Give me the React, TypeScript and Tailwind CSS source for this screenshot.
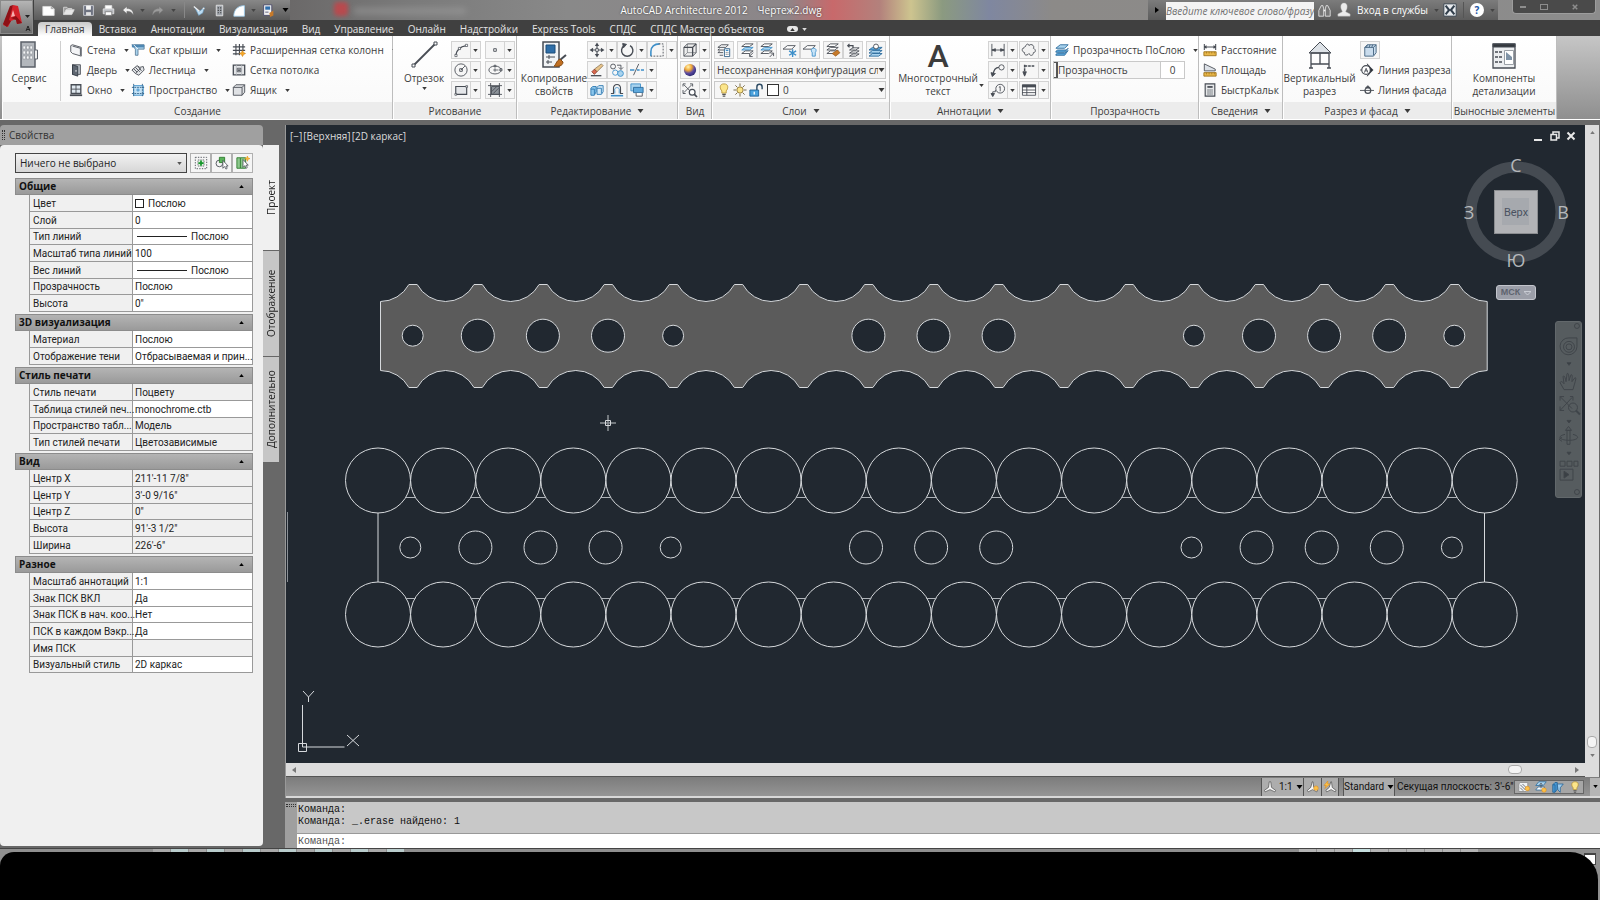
import { useState } from 'react';
import type { ReactNode } from 'react';
import clsx from 'clsx';

const BLUE = '#3d8fc9';
const LIGHT = '#a9d3ee';
const INK = '#474c54';

/* small ribbon glyphs, all drawn in a 16x16 box */
const glyphs: Record<string, ReactNode> = {
  newFile: <path d="M1 3h10l4 3v8H1z M11 3v3h4" fill="#fff" stroke="#ddd" />,
  open: <g stroke="#ddd" fill="#9a9a9a"><path d="M2 13V4h4l1 1.500h5V7" /><path d="M2 13l3-6h10l-3 6z" fill="#e6e6e6" /></g>,
  save: <g><path d="M2 2h12v12H2z" fill="#6d7280" stroke="#d5d8de" /><path d="M5 2h6v5H5z" fill="#f4f4f4" stroke="none" /><path d="M5 10h6v4H5z" fill="#e0e0e0" stroke="none" /></g>,
  print: <g stroke="#e8e8e8"><path d="M4 6V2h8v4" fill="#fff" /><path d="M1.500 6h13v6h-13z" fill="#b9bcc1" /><path d="M4 9.500h8V14H4z" fill="#fff" stroke="#777" /></g>,
  undo: <path d="M6 3L1 7.500 6 12V9c4 0 6 1 8 4.500C14 8 11 5.500 6 5.500z" fill="#eee" stroke="#666" strokeWidth=".5" />,
  redo: <path d="M10 3l5 4.500L10 12V9c-4 0-6 1-8 4.500C2 8 5 5.500 10 5.500z" fill="#9b9b9b" stroke="#777" strokeWidth=".5" />,
  brushBlue: <g><path d="M2 4l6 5 6-5-2 7-5 3z" fill="#bcdcf2" stroke="#5d93ba" strokeWidth=".7" /><path d="M1 3l7 6M12 5l2 1" stroke="#eee" strokeWidth="1.500" /></g>,
  doorQat: <g stroke="#eee"><path d="M4 1.500h8v13H4z" fill="#9fa4ab" /><path d="M6.500 4v1.500M9.500 4v1.500M6.500 7v1.500M9.500 7v1.500M6.500 10v1.500M9.500 10v1.500" stroke="#333" strokeWidth="1.300" /></g>,
  arcQat: <path d="M1 15C1 7 6 2 14 2v13z" fill="#fff" stroke="#9fd0f0" />,
  matchQat: <g><path d="M2 1h10v13H2z" fill="#f2f2f2" stroke="#446" /><path d="M4 3h6v4H4z" fill="#2f6fae" stroke="none" /><path d="M4 10h4" stroke="#446" /><path d="M9 11l5-3v6l-4 2z" fill="#c77a2a" stroke="none" /></g>,
  wall: <path d="M2 3l2-1 10 3v10l-10-3-2-2z M4 3.500l9 2.500V14" fill="#f3f4f6" strokeLinejoin="round" />,
  door: <g><path d="M4 2h9v11H4z" fill="#b9bfc6" /><path d="M4 2l6 2v11l-6-2z" fill="#5f6772" stroke="#333b45" /><path d="M8 8v2" stroke="#fff" /></g>,
  window: <g><path d="M2.500 2h11v10h-11z" fill="#dfe8ef" strokeWidth="1.500" /><path d="M8 2v10M2.500 7h11" /><path d="M1 14h14" strokeWidth="2" /></g>,
  roof: <g><path d="M1 2h14v5H8v7H5V7z" fill={LIGHT} stroke="#5c7e99" /><path d="M1 2h14v3H1z" fill="#4d87b3" stroke="none" /><path d="M8 7l-5-5" stroke="#fff" /></g>,
  stair: <g><path d="M1 8l6-5 3 2 4-1 1 4-6 6-4-2z" fill="#e3e5e8" /><path d="M3 6.500l4 4M5 5l5 5M8 4l4 5M5 12l6-6" /></g>,
  space: <g><path d="M3 3h11v11H3z" fill="#c4e2f5" stroke={BLUE} /><path d="M3 1v14M13 1v14M1 5h14M1 12h14" stroke="#2f5f86" strokeDasharray="2 1" /><path d="M8 6v4M6 8h4" stroke={BLUE} /></g>,
  columnGrid: <g strokeWidth="1.300"><path d="M4.500 1v13M8.500 1v13M12.500 1v8M1 4.500h14M1 8.500h14M1 12.500h8" /><path d="M12 8.500l1.200 2.300 2.300 1.200-2.300 1.200L12 15.500l-1.200-2.300L8.500 12l2.300-1.200z" fill="#f5a623" stroke="#c97b10" strokeWidth=".6" /></g>,
  ceiling: <g><path d="M1.500 2.500h13v11h-13z" fill="#e4e6e8" strokeWidth="1.500" /><path d="M5 2.500v11M11 2.500v11" stroke="#b8bcc0" /><path d="M6 6h4v4H6z" fill="#fff" /><path d="M8 7v2" strokeWidth="2" /></g>,
  box: <path d="M1.500 5l3-3h10v8.500l-3 3.500h-10z M1.500 5h10v9 M11.500 5l3-3" fill="#dfe1e4" strokeLinejoin="round" />,
  arc: <g><path d="M2 14C3 8 7 4 14 3" strokeWidth="1.500" /><path d="M1 13h2.500v2.500H1zM13 1.500h2.500V4H13zM5 5h2.500v2.500H5z" fill="#fff" strokeWidth=".8" /></g>,
  point: <path d="M6.500 6.500h3v3h-3z" />,
  circle: <g><circle cx="8" cy="8" r="7" /><path d="M8 8l4.500-4.500M6.500 6.500h3v3h-3z" /></g>,
  ellipse: <g><ellipse cx="8" cy="8" rx="7" ry="4.500" /><path d="M8 6v4M6 8h6M13.500 6.500h2.500v2.500h-2.500zM7 2.500h2v2H7z" strokeWidth=".9" /></g>,
  rect: <g><path d="M2 4h12.500v9H2z" fill="#e4e6e9" strokeWidth="1.300" /><path d="M1 12h2v2H1zM13.500 3h2v2h-2z" fill="#fff" strokeWidth=".8" /></g>,
  hatch: <g><path d="M4 4h9v9H4z" fill="#8c9299" /><path d="M0 3h16M0 13h16M3 0v16M13 0v16M4 10l6-6M6 12l6-6" /></g>,
  move: <g fill={INK}><path d="M8 2v12M2 8h12" strokeWidth="1.300" /><path d="M8-.5l2.500 4h-5zM8 16.500l2.500-4h-5zM-.5 8l4-2.500v5zM16.500 8l-4-2.500v5z" stroke="none" /><path d="M6.500 6.500h3v3h-3z" fill="#fff" /></g>,
  rotate: <g><path d="M11.500 3A6.500 6.500 0 1 1 5 3" strokeWidth="1.600" /><path d="M3 .5l4.500 1L4 5.500z" fill={INK} /></g>,
  fillet: <g><path d="M1 15V10C1 4 5 1 11 1" stroke={BLUE} strokeWidth="1.800" /><path d="M10 1h5v14H1" strokeDasharray="2 1.500" /></g>,
  erase: <g><path d="M13 1l2 2-7 7-3-3z" fill="#e8c48a" stroke="#7d6543" strokeWidth=".8" /><path d="M5 7l3 3-3 3-3-3z" fill="#d8664d" stroke="#7a3728" strokeWidth=".8" /><path d="M1 14.500h12" strokeWidth="1.500" /></g>,
  copy: <g><circle cx="3.500" cy="4" r="2.800" /><circle cx="6" cy="11" r="3" stroke={BLUE} /><circle cx="12" cy="12" r="3.300" fill={LIGHT} stroke={BLUE} /><path d="M8 2.500h4.500V7M10 5l2.500 2.500L15 5" /></g>,
  trim: <g><path d="M0 8h5M8 8h3M12.500 8H16" stroke={BLUE} strokeWidth="1.500" /><path d="M4 14L10 1" /></g>,
  solid: <g stroke="#2a77b0" fill="#8cc6ec"><path d="M1 6l2-2h4v6l-2 4H1zM1 7h4v6" /><path d="M8 5l2-2h5v7l-2 3H8zM8 6h5v6" fill="#d3eafa" /></g>,
  offset: <g><path d="M5.500 12V9C4 4 12 4 10.500 9v3" stroke={BLUE} /><path d="M1 12h3V7c-1-7 9-7 8 0v5h3" strokeWidth="1.300" /><path d="M1 14.500h14" stroke={BLUE} strokeWidth="1.800" /></g>,
  overlap: <g><path d="M1 1h11v8H1z" fill={LIGHT} stroke={BLUE} /><path d="M4 5h11v6H4z" fill="#5fa9dc" stroke="#2a6a9c" /><path d="M7 11.500V15h7v-3.500" fill="#fff" /></g>,
  cube: <g><path d="M1 5l4-4h10v10l-4 4H1z" fill="#eee" /><path d="M1 5h10v10M11 5l4-4" strokeWidth="1.500" /><path d="M5 1v10h10M5 11l-4 4" strokeWidth=".6" /></g>,
  zoomExt: <g><path d="M0 4V1h3M1 2l9 9M8 1h3v3M10 2L1 11M0 8v4h3" /><circle cx="10.500" cy="10.500" r="3.300" fill="#fff" strokeWidth="1.400" /><path d="M13 13l3 3" strokeWidth="2" /></g>,
  layerProps: <g><path d="M1 5l4-3h8l-3 3zM1 8l2-1.500M1 8h7M1 11l2-1.500M1 11h6M3 14h4" /><path d="M8.500 6.500h6v9h-6z" fill="#fff" stroke="#2f5f86" /><path d="M10 8.500h3" stroke={BLUE} strokeWidth="1.500" /><path d="M10 11h3M10 13h3" strokeDasharray="1 1" /></g>,
  layersDown: <g><path d="M2 4l4-3h9l-4 3z" fill="#fff" /><path d="M2 8l4-3h9l-4 3z" fill={LIGHT} stroke={BLUE} /><path d="M2 12l4-3h9l-4 3z" fill="#fff" /><path d="M15 11l-4 4M11 12v3.500h3.500" /></g>,
  layersUp: <g><path d="M1 4l4-3h9l-4 3z" fill="#fff" /><path d="M1 8l4-3h9l-4 3z" fill={LIGHT} stroke={BLUE} /><path d="M1 12l4-3h9l-4 3z" fill="#fff" /><path d="M11 16l4-4M12 11.500h3.500V15" /></g>,
  layerFreeze: <g><path d="M0 7l5-4h9l-4 4z" fill="#fff" /><path d="M11 7v9M7 9l8 5M15 9l-8 5" stroke={BLUE} strokeWidth="1.600" /></g>,
  layerOff: <g><path d="M0 7l5-4h9l-4 4z" fill="#fff" /><path d="M12 6c3.500 0 3.500 3 2 5v4h-3.500v-4C9 9 9 6 12 6z" fill="#c8e4f8" stroke={BLUE} /></g>,
  layerMatch: <g><path d="M1 4l4-3h9l-4 3zM1 8l4-3h9l-4 3zM1 12l4-3h9l-4 3z" fill="#fff" /><path d="M7 12l6-4 3 3-5 4z" fill="#c77a2a" stroke="#8d5317" strokeWidth=".7" /></g>,
  layerPrev: <g><path d="M4 8l4-2.500h7L11 8zM4 11.500L8 9h7l-4 2.500zM4 15l4-2.500h7L11 15z" fill="#fff" /><path d="M8 6V3H2M4 1L2 3l2 2" strokeWidth="1.400" /></g>,
  layerIso: <g><path d="M0 8l4-3h11l-4 3z" fill="#5fa9dc" stroke="#2a6a9c" /><path d="M0 11.500l4-3h11l-4 3zM0 15l4-3h11l-4 3z" fill={LIGHT} stroke="#2a6a9c" /><circle cx="8" cy="4" r="2.800" fill="#fff" /></g>,
  dimLinear: <path d="M1 1v14M15 1v14M1 8h14M1 8l4-1.500v3zM15 8l-4-1.500v3z" fill={INK} />,
  cloud: <path d="M4 4c1-4 4-3 4-1 2-3 7 0 5 3 3 1 3 5 0 5 0 4-4 4-5 1-2 3-6 2-5-1-4-1-3-6-1-5 0-1 1-2 2-2z" fill="#f2f2f2" />,
  leader: <g><path d="M2 14c1-6 3-9 7-9" strokeWidth="1.500" /><circle cx="12" cy="5" r="3" /><path d="M0 11l1.500 4.500L5 12z" fill={INK} /></g>,
  dimCont: <g><path d="M3 2v11M3 3.500h12" strokeWidth="1.700" strokeDasharray="3 1" /><path d="M1 10l2 5 2-5z" fill={INK} /></g>,
  tag: <g><circle cx="10.500" cy="6.500" r="5" /><path d="M10.500 4v5.500M9 5l1.500-1M2 14v-4h3v-2" /><path d="M0 12h4l-2 3.500z" fill={INK} /></g>,
  tableG: <g><path d="M.5 2h15v12H.5z" fill="#fff" /><path d="M0 3.500h16" strokeWidth="3" /><path d="M0 8h16M0 11h16M5.500 4v10" /></g>,
  layersBlue: <g stroke="#2a6a9c"><path d="M1 6l5-4h9l-4 4z" fill={LIGHT} /><path d="M1 9.500l2-1.500h10l2-2-4 4.500H1zM1 13l2-1.500h8l4-3L11 14H1z" fill="#5fa9dc" /></g>,
  distance: <g><path d="M1.500 1v7M14.500 1v7M2 4.500h12M4 3L2 4.500 4 6M12 3l2 1.500L12 6" strokeWidth="1.200" /><path d="M1 10h14v4.500H1z" fill="#e9b84a" stroke="#9c7018" /><path d="M4 10v2M7 10v2M10 10v2M13 10v2" stroke="#9c7018" strokeWidth=".8" /></g>,
  area: <g><path d="M1.500 1L14 7v2H1.500z" fill="#dde2e8" /><path d="M1 11h14v4H1z" fill="#e9b84a" stroke="#9c7018" /><path d="M4 11v2M7 11v2M10 11v2M13 11v2" stroke="#9c7018" strokeWidth=".8" /></g>,
  calc: <g><path d="M2.500 1h11v14h-11z" fill="#e6e8ea" strokeWidth="1.300" /><path d="M5 4.500h6" strokeWidth="2" /><path d="M5 8h6M5 10.300h6M5 12.600h6" strokeDasharray="1.500 .8" strokeWidth="1.300" /></g>,
  sectionBox: <path d="M2 5l3-3h10v9l-3 4H2z M2 5h10v9M12 5l3-3M5 2l-1 3M8 2L7 5M11 2l-1 3" fill="#c9dced" stroke="#3f5f7b" />,
  sectionLine: <g><circle cx="7" cy="8" r="5" fill="#fff" strokeWidth="1.300" /><path d="M8 1l7 7-7 7c5-3 5-11 0-14z" fill="#2c3138" /><path d="M5 11l2-5 2 5M5.500 9h3M0 8h2" /></g>,
  facadeLine: <g><circle cx="9" cy="8.500" r="3.300" strokeWidth="1.400" /><path d="M0 8.500h16M6.500 5.500L9 3l2.500 2.500z" fill={INK} /></g>,
  binoculars: <g stroke="#eee"><path d="M1 15V8l3-6h2l1 4v9zM15 15V8l-3-6h-2L9 6v9z" fill="#777" /><path d="M7 8h2" strokeWidth="2" /></g>,
  user: <g fill="#ececec" stroke="#aaa" strokeWidth=".5"><path d="M8 0c3.500 0 4 3 3.500 6-.5 2-1.500 3-1.500 4l5 2.500V15H1v-2.500L6 10c0-1-1-2-1.500-4C4 3 4.500 0 8 0z" /></g>,
  exchange: <g><path d="M1 1h14v14H1z" fill="#e9ecef" stroke="#33404d" /><path d="M3 3l4 5-4 5M13 3L9 8l4 5" stroke="#33404d" strokeWidth="2.400" /></g>,
  selectAdd: <g><path d="M1.500 1.500h13v13h-13z" strokeDasharray="1.500 1.500" /><path d="M4.500 4.500h7v7h-7z" strokeDasharray="1 1" fill="#e2f5e2" /><path d="M8 5v6M5 8h6" stroke="#14962a" strokeWidth="2" /></g>,
  selectPick: <g><circle cx="5" cy="8.500" r="3.800" /><path d="M5 1.500h6v6H5z" fill="#5bb35b" stroke="#2b7a2b" /><path d="M9 5v9l2-2 1.500 3 1.500-1-1.500-2.500H15z" fill="#fff" strokeWidth=".9" /></g>,
  quickSelect: <g><path d="M1 2h4v12H1zM5 2h6v12H5" fill="#8cc88c" stroke="#2b7a2b" /><path d="M8 4v9l2-2 1.500 3 1.500-1-1.500-2.500H14z" fill="#fff" strokeWidth=".9" /><path d="M13 0l.8 2.200L16 3l-2.200.8L13 6l-.8-2.200L10 3l2.200-.8z" fill="#f8b73a" stroke="#e8960c" strokeWidth=".6" /></g>,
  annoScale: <path d="M8 1h1l1 7.500 5.500 4-1 2L8 11.500l-6.500 3-1-2L6 8.500 7 1z" fill="#f5f5f5" stroke="#555" />,
  annoBulb: <g><path d="M7 1h1l1 7.500 5 4-1 2-5.500-3-6 3-1-2 4.500-4z" fill="#f5f5f5" stroke="#555" /><circle cx="12" cy="9.500" r="3" fill="#fbc04a" stroke="#e08a10" strokeWidth=".7" /></g>,
  annoBolt: <g><path d="M9 1h1l1 7.500 5 4-1 2-5.500-3-6 3-1-2 4.500-4z" fill="#f5f5f5" stroke="#555" /><path d="M5 0L0 6h3L1 10l7-6H5z" fill="#fbc04a" stroke="#e08a10" strokeWidth=".7" /></g>,
  trayA: <g><path d="M1 4l2-2h10v10l-2 2H1z" fill="#eef1f4" stroke="#888" /><path d="M3 5l7 7M3 9l4 4M6 4l6 6" /><circle cx="12.500" cy="10" r="3" fill="#fbc04a" stroke="#e08a10" strokeWidth=".7" /></g>,
  trayB: <g><path d="M1 6l4-5h10l-4 5z" fill={LIGHT} stroke="#2a6a9c" /><path d="M1 12l3-4h9l-3 4z" stroke="#2a6a9c" fill="#fff" /><path d="M8 3v7M6 5l2-2 2 2" /><circle cx="12" cy="12" r="3" fill="#fbc04a" stroke="#e08a10" strokeWidth=".7" /></g>,
  trayC: <g stroke="#1d5e93"><path d="M1 5l3-3h3v9l-3 4H1zM4 5v10M1 5h3" fill="#4b9bd6" /><path d="M7 4h8l-4 5v6l-3-3z" fill="#9fcdee" /></g>,
  bulb: <g><path d="M8 1c5.500 0 5 5.500 2.500 8v2.500h-5V9C3 6.500 2.500 1 8 1z" fill="#fbe58a" stroke="#b08a2a" strokeWidth=".9" /><path d="M6 13h4M6.500 15h3" stroke="#555" strokeWidth="1.300" /></g>,
  sun: <g><circle cx="8" cy="8" r="3.600" fill="#fbe58a" stroke="#8d7434" /><path d="M8 .5v3M8 12.500v3M.5 8h3M12.500 8h3M2.700 2.700l2.100 2.100M11.200 11.200l2.100 2.100M13.300 2.700l-2.100 2.100M4.800 11.200l-2.100 2.100" stroke="#6a5c38" /></g>,
  unlock: <g><path d="M1 8h10v7H1z" fill="#4ba3de" stroke="#1d5e93" /><path d="M9 8V4.500c0-4 6-4 6 0V7" stroke="#2c4a63" strokeWidth="1.600" /><path d="M6 10v3" stroke="#fff" strokeWidth="1.500" /></g>,
};

function Glyph({ name, className = 'w-3.5 h-3.5' }: { name: string; className?: string }) {
  if (name === 'sphere') {
    return (
      <svg viewBox="0 0 16 16" className={clsx('shrink-0', className)}>
        <defs>
          <radialGradient id="sphere" cx=".35" cy=".25" r=".8">
            <stop offset="0" stopColor="#fff3b0" />
            <stop offset=".35" stopColor="#f0a838" />
            <stop offset=".65" stopColor="#5b4aa0" />
            <stop offset="1" stopColor="#2a2870" />
          </radialGradient>
        </defs>
        <circle cx="8" cy="8" r="7" fill="url(#sphere)" />
      </svg>
    );
  }
  return (
    <svg viewBox="0 0 16 16" fill="none" stroke={INK} className={clsx('shrink-0 overflow-visible', className)}>
      {glyphs[name]}
    </svg>
  );
}

function Tri({ big = false, className = 'text-[#3a3a3a]' }: { big?: boolean; className?: string }) {
  return (
    <svg viewBox="0 0 6 4" fill="currentColor" className={clsx('shrink-0', big ? 'w-[7px] h-1' : 'w-[5px] h-[3px]', className)}>
      <path d="M0 0h6L3 4z" />
    </svg>
  );
}

/* ---------- ribbon building blocks ---------- */

function Panel({ title, more, width, children }: { title: string; more?: boolean; width: string; children: ReactNode }) {
  return (
    <section className={clsx('flex shrink-0 flex-col border-r border-[#bdbdbd]', width)}>
      <div className="flex h-[66px] gap-1 bg-gradient-to-b from-white to-[#fafafa] pt-[5px]">{children}</div>
      <h2 className="flex h-[17px] items-center justify-center gap-1.5 whitespace-nowrap border-l border-white bg-[#ececec] font-normal">
        {title}
        {more && <Tri big />}
      </h2>
    </section>
  );
}

function TextButton({ icon, label, arrow = true }: { icon: string; label: string; arrow?: boolean }) {
  return (
    <button className="flex h-[18px] items-center gap-1 whitespace-nowrap text-left">
      <Glyph name={icon} />
      <span>{label}</span>
      {arrow && <Tri className="ml-1 text-[#3a3a3a]" />}
    </button>
  );
}

function IconButton({ icon, split = false }: { icon: string; split?: boolean }) {
  return (
    <button
      aria-label={icon}
      className={clsx('flex h-[18px] items-center border border-[#d3d3d3] bg-[#f6f6f6]', split ? 'w-[30px]' : 'w-5 justify-center')}
    >
      <span className={clsx('flex h-4 items-center justify-center', split && 'w-[19px] shrink-0 border-r border-[#d3d3d3]')}>
        <Glyph name={icon} />
      </span>
      {split && <span className="flex flex-1 justify-center"><Tri /></span>}
    </button>
  );
}

function BigButton({ icon, lines, arrow, width }: { icon: ReactNode; lines: string[]; arrow?: boolean; width: string }) {
  return (
    <button className={clsx('flex shrink-0 flex-col items-center self-start whitespace-nowrap leading-[13px]', width)}>
      <span className="flex h-[31px] items-start justify-center">{icon}</span>
      {lines.map((l) => <span key={l}>{l}</span>)}
      {arrow && <Tri className="mt-0.5 text-[#3a3a3a]" />}
    </button>
  );
}

const serviceIcon = (
  <svg viewBox="0 0 20 27" className="h-[27px] w-5">
    <path d="M2 1h14v25H2z" fill="#b3b7bc" stroke="#5b6068" strokeWidth="1.500" />
    <path d="M16 9h2.500v9H16" fill="#eee" stroke="#5b6068" />
    {[5, 10, 15].map((y) => [4, 7.5, 11].map((x) => <rect key={`${x}-${y}`} x={x} y={y} width="2.500" height="3" fill="#f5f6f7" stroke="#84898f" strokeWidth=".5" />))}
  </svg>
);
const lineIcon = (
  <svg viewBox="0 0 27 27" className="h-[27px] w-[27px]" fill="none" stroke={INK}>
    <path d="M3 24L24 3" strokeWidth="1.800" />
    <path d="M1 23h3v3H1zM23 1h3v3h-3z" fill="#fff" />
  </svg>
);
const matchIcon = (
  <svg viewBox="0 0 26 28" className="h-7 w-[26px]" fill="none" stroke={INK}>
    <path d="M2 1h16v25H2z" fill="#f1f3f5" strokeWidth="1.500" />
    <path d="M5 4h9v8H5z" fill="#2f6ea8" stroke="#1d4c78" />
    <path d="M5 16h9M8 14v4M5 21h6M7 19v4" />
    <path d="M25 14l-6 5" strokeWidth="2" />
    <path d="M19 18l3 3c0 4-5 5-9 4 2-1 2-5 6-7z" fill="#c06f22" stroke="#854a12" />
  </svg>
);
const houseIcon = (
  <svg viewBox="0 0 24 28" className="h-7 w-6" fill="none" stroke={INK}>
    <path d="M12 1l11 11H1z" fill="#dde2e7" />
    <path d="M3 12h18v11H3zM12 12v11M3 23v4M21 23v4M1 27h4M19 27h4" strokeWidth="1.300" />
  </svg>
);
const detailIcon = (
  <svg viewBox="0 0 24 26" className="mt-0.5 h-[26px] w-6" fill="none" stroke={INK}>
    <path d="M1 1h22v24H1z" fill="#eceef0" strokeWidth="1.300" />
    <path d="M1 1h22v3H1z" fill="#33373c" />
    <path d="M3 9h3M7 9h3M3 14h3M7 14h3M3 19h3M7 19h3" strokeWidth="1.300" />
    <path d="M12.500 7.500h9v14h-9z" fill="#fff" stroke="#9aa0a6" />
    <path d="M14 17V9l6 5v3z" fill="#7f93a6" stroke="none" />
  </svg>
);

function Rows({ rows }: { rows: ReactNode[] }) {
  return (
    <div className="flex shrink-0 flex-col gap-0.5">
      {rows.map((r, i) => <div key={i} className="flex h-[18px]">{r}</div>)}
    </div>
  );
}

function Ribbon() {
  return (
    <div className="flex h-[84px] shrink-0 overflow-hidden border-b border-white bg-gradient-to-b from-[#c6c6c6] to-[#8f8f8f] pl-0.5 text-[10px] leading-[14px] text-[#3c3c3c]">
      <Panel title="Создание" width="w-[391px]">
        <BigButton icon={serviceIcon} lines={['Сервис']} arrow width="w-[54px]" />
        <div className="mr-1 h-[60px] border-l border-[#cfcfcf]" />
        <div className="grid h-[58px] grid-cols-[62px_101px_auto] gap-y-0.5">
          <TextButton icon="wall" label="Стена" />
          <TextButton icon="roof" label="Скат крыши" />
          <TextButton icon="columnGrid" label="Расширенная сетка колонн" />
          <TextButton icon="door" label="Дверь" />
          <TextButton icon="stair" label="Лестница" />
          <TextButton icon="ceiling" label="Сетка потолка" arrow={false} />
          <TextButton icon="window" label="Окно" />
          <TextButton icon="space" label="Пространство" />
          <TextButton icon="box" label="Ящик" />
        </div>
      </Panel>

      <Panel title="Рисование" width="w-[124px]">
        <div className="w-1" />
        <BigButton icon={lineIcon} lines={['Отрезок']} arrow width="w-[46px]" />
        <Rows rows={['arc', 'circle', 'rect'].map((i) => <IconButton key={i} icon={i} split />)} />
        <Rows rows={['point', 'ellipse', 'hatch'].map((i) => <IconButton key={i} icon={i} split />)} />
      </Panel>

      <Panel title="Редактирование" more width="w-[161px]">
        <div className="w-1 shrink-0" />
        <BigButton icon={matchIcon} lines={['Копирование', 'свойств']} width="w-[58px]" />
        <Rows
          rows={[
            <><IconButton icon="move" split /><IconButton icon="rotate" split /><IconButton icon="fillet" split /></>,
            <><IconButton icon="erase" /><IconButton icon="copy" /><IconButton icon="trim" split /></>,
            <><IconButton icon="solid" /><IconButton icon="offset" /><IconButton icon="overlap" split /></>,
          ]}
        />
      </Panel>

      <Panel title="Вид" width="w-[34px]">
        <div className="pl-0.5">
          <Rows rows={['cube', 'sphere', 'zoomExt'].map((i) => <IconButton key={i} icon={i} split />)} />
        </div>
      </Panel>

      <Panel title="Слои" more width="w-[178px]">
        <div className="flex flex-col gap-0.5 pl-0.5">
          <div className="flex h-[18px] gap-[3px]">
            <IconButton icon="layerProps" />
            <div className="flex"><IconButton icon="layersDown" /><IconButton icon="layersUp" /></div>
            <div className="flex"><IconButton icon="layerFreeze" /><IconButton icon="layerOff" /></div>
            <div className="flex"><IconButton icon="layerMatch" /><IconButton icon="layerPrev" /></div>
            <IconButton icon="layerIso" />
          </div>
          <label className="flex h-[18px] w-[172px] items-center border border-[#c9c9c9] bg-[#f3f3f3] pl-0.5">
            <select aria-label="Конфигурация слоев" className="min-w-0 flex-1 appearance-none bg-transparent outline-none">
              <option>Несохраненная конфигурация сл</option>
            </select>
            <Tri big />
          </label>
          <label className="flex h-[18px] w-[172px] items-center gap-0.5 border border-[#c9c9c9] bg-[#f6f6f6] pl-0.5">
            <Glyph name="bulb" />
            <Glyph name="sun" />
            <Glyph name="unlock" />
            <span className="ml-0.5 h-3 w-3 border border-[#333] bg-white" />
            <select aria-label="Слой" className="min-w-0 flex-1 appearance-none bg-transparent pl-0.5 outline-none">
              <option>0</option>
            </select>
            <Tri big />
          </label>
        </div>
      </Panel>

      <Panel title="Аннотации" more width="w-[161px]">
        <div className="flex w-[94px] shrink-0 items-center justify-between pl-2">
          <BigButton
            icon={<span className="font-['Roboto'] text-[32px] font-medium leading-[30px]">A</span>}
            lines={['Многострочный', 'текст']}
            width="w-[80px]"
          />
          <Tri className="mt-7 text-[#3a3a3a]" />
        </div>
        <div className="flex gap-px">
          <Rows rows={['dimLinear', 'leader', 'tag'].map((i) => <IconButton key={i} icon={i} split />)} />
          <Rows rows={['cloud', 'dimCont', 'tableG'].map((i) => <IconButton key={i} icon={i} split />)} />
        </div>
      </Panel>

      <Panel title="Прозрачность" width="w-[148px]">
        <div className="flex flex-col gap-0.5 pl-0.5">
          <div className="pl-0.5"><TextButton icon="layersBlue" label="Прозрачность ПоСлою" /></div>
          <div className="flex h-[18px] w-[132px] items-center border border-[#c9c9c9] bg-[#f6f6f6]">
            <span className="h-4 w-1 border-y border-r-2 border-[#555]" />
            <label htmlFor="transparency" className="flex-1">Прозрачность</label>
            <input id="transparency" defaultValue="0" className="h-4 w-6 border-l border-[#c9c9c9] bg-white text-center outline-none" />
          </div>
        </div>
      </Panel>

      <Panel title="Сведения" more width="w-[84px]">
        <div className="flex flex-col gap-0.5 pl-1">
          <TextButton icon="distance" label="Расстояние" arrow={false} />
          <TextButton icon="area" label="Площадь" arrow={false} />
          <TextButton icon="calc" label="БыстрКальк" arrow={false} />
        </div>
      </Panel>

      <Panel title="Разрез и фасад" more width="w-[169px]">
        <BigButton icon={houseIcon} lines={['Вертикальный', 'разрез']} width="w-[73px]" />
        <div className="flex flex-col gap-0.5">
          <IconButton icon="sectionBox" />
          <TextButton icon="sectionLine" label="Линия разреза" arrow={false} />
          <TextButton icon="facadeLine" label="Линия фасада" arrow={false} />
        </div>
      </Panel>

      <Panel title="Выносные элементы" width="w-[105px]">
        <BigButton icon={detailIcon} lines={['Компоненты', 'детализации']} width="w-full" />
      </Panel>
    </div>
  );
}

/* ---------- title bar and tabs ---------- */

const tabs = ['Главная', 'Вставка', 'Аннотации', 'Визуализация', 'Вид', 'Управление', 'Онлайн', 'Надстройки', 'Express Tools', 'СПДС', 'СПДС Мастер объектов'];

function QatButton({ icon }: { icon: string }) {
  return (
    <button aria-label={icon} className="flex w-5 justify-center">
      <Glyph name={icon} className="w-[13px] h-[13px]" />
    </button>
  );
}

function Header() {
  const [active, setActive] = useState('Главная');
  return (
    <header className="flex h-9 shrink-0 bg-[#404040] text-[10px]">
      <button aria-label="Меню приложения" className="mr-px h-[34px] w-[33px] shrink-0 border border-[#8a8a8a] bg-gradient-to-b from-[#b5b5b5] to-[#6c6c6c]">
        <svg viewBox="0 0 31 32" className="h-8 w-[31px]">
          <path d="M12 4l5 1 4 17-5 1-1-5-5 2-3 6-5-2z" fill="#d3222a" />
          <path d="M12 4l-3 1L2 23l4 3 4-6-2-1zM10 17l5-2 6 7-5 1-1-4z" fill="#8e1016" />
          <path d="M12 9l2 6-4 1z" fill="#f6b0b0" />
          <path d="M24 14h5l-2.500 3z" fill="#222" />
          <path d="M25 30l2-5 2 5M26 28.500h2" stroke="#222" fill="none" />
        </svg>
      </button>
      <div className="min-w-0 flex-1">
        <div className="flex h-5 items-center bg-[linear-gradient(90deg,#5a5a5a_0%,#6a6868_16%,#7a7a7a_24%,#898989_34%,#8c8689_48%,#c8696b_51%,#b3817c_54%,#cdc48f_56%,#8b9a80_58%,#7f87a0_61%,#8c8a88_65%,#8c8c8c_100%)] text-white">
          <div className="flex h-5 w-[256px] shrink-0 items-center bg-gradient-to-b from-[#888] to-[#5a5a5a] pl-1">
            {['newFile', 'open', 'save', 'print', 'undo'].map((g) => <QatButton key={g} icon={g} />)}
            <Tri className="mx-0.5 text-[#444]" />
            <QatButton icon="redo" />
            <Tri className="ml-1 mr-2 text-[#444]" />
            <span className="mr-1 h-4 border-l border-[#888]" />
            {['brushBlue', 'doorQat', 'arcQat'].map((g) => <QatButton key={g} icon={g} />)}
            <Tri className="mx-0.5 text-[#444]" />
            <QatButton icon="matchQat" />
            <Tri big className="ml-1 text-black" />
          </div>
          <div className="relative flex-1">
            <span className="absolute left-11 top-0.5 h-3.5 w-3.5 rounded bg-[#b84a4e] blur-[2px]" />
            <span className="absolute left-16 top-2 h-1.5 w-28 bg-[#a5a5a5] opacity-50 blur-[3px]" />
            <h1 className="flex justify-center gap-2.5 pl-1 font-normal leading-5 [text-shadow:0_0_2px_#333]">
              <span>AutoCAD Architecture 2012</span>
              <span>Чертеж2.dwg</span>
            </h1>
          </div>
          <div className="flex h-5 w-[350px] shrink-0 items-center bg-gradient-to-b from-[#7c7c7c] to-[#5c5c5c]">
            <span className="flex w-[18px] shrink-0 justify-center"><svg viewBox="0 0 4 6" className="h-1.5 w-1"><path d="M0 0l4 3-4 3z" /></svg></span>
            <input aria-label="Поиск" placeholder="Введите ключевое слово/фразу" className="h-[18px] w-[148px] shrink-0 self-end bg-[#f4f4f4] outline-none placeholder:italic placeholder:text-[#707070]" />
            <button aria-label="Найти" className="ml-1"><Glyph name="binoculars" className="w-[13px] h-[13px]" /></button>
            <button className="ml-1.5 flex items-center gap-1.5 whitespace-nowrap">
              <Glyph name="user" />
              Вход в службы
              <Tri className="text-[#444]" />
            </button>
            <button aria-label="Exchange" className="ml-1"><Glyph name="exchange" /></button>
            <span className="ml-1.5 h-4 border-l border-[#555]" />
            <button aria-label="Справка" className="ml-1.5 flex h-3.5 w-3.5 items-center justify-center rounded-full bg-white font-bold leading-3 text-[#2455a5]">?</button>
            <Tri className="ml-1.5 text-[#444]" />
          </div>
          <div className="mr-1 ml-3.5 flex h-[14px] w-[84px] shrink-0 items-center self-start rounded-b-sm border border-t-0 border-[#9d9d9d] bg-[#4a4a4a] text-[#8d8d8d]">
            <button aria-label="Свернуть" className="flex w-5 justify-center"><span className="h-0.5 w-1.5 bg-current" /></button>
            <button aria-label="Развернуть" className="flex flex-1 justify-center"><span className="h-1.5 w-2 border border-current" /></button>
            <button aria-label="Закрыть" className="flex w-10 justify-center"><svg viewBox="0 0 8 8" className="h-1.5 w-2" stroke="currentColor" strokeWidth="2"><path d="M1 1l6 6M7 1L1 7" /></svg></button>
          </div>
        </div>
        <nav className="flex h-4 items-end pl-1 leading-[14px] text-[#e4e4e4]">
          {tabs.map((t) => (
            <button
              key={t}
              onClick={() => setActive(t)}
              className={clsx('h-3.5 whitespace-nowrap px-[7px]', active === t && 'rounded-t-sm bg-gradient-to-b from-[#c9c9c9] to-white text-[#333]')}
            >
              {t}
            </button>
          ))}
          <button aria-label="Свернуть ленту" className="ml-4 flex h-3.5 items-center gap-1">
            <span className="flex h-1.5 w-[11px] items-center justify-center rounded-sm bg-[#e6e6e6]">
              <Tri className="rotate-180 text-[#333]" />
            </span>
            <Tri className="text-[#ddd]" />
          </button>
        </nav>
      </div>
    </header>
  );
}

/* ---------- properties palette ---------- */

type Row = { label: string; value: string; ro?: boolean; mark?: 'swatch' | 'line' };

const sections: { title: string; rows: Row[] }[] = [
  {
    title: 'Общие',
    rows: [
      { label: 'Цвет', value: 'Послою', mark: 'swatch' },
      { label: 'Слой', value: '0' },
      { label: 'Тип линий', value: 'Послою', mark: 'line' },
      { label: 'Масштаб типа линий', value: '100' },
      { label: 'Вес линий', value: 'Послою', mark: 'line' },
      { label: 'Прозрачность', value: 'Послою' },
      { label: 'Высота', value: '0"' },
    ],
  },
  {
    title: '3D визуализация',
    rows: [
      { label: 'Материал', value: 'Послою' },
      { label: 'Отображение тени', value: 'Отбрасываемая и прин...' },
    ],
  },
  {
    title: 'Стиль печати',
    rows: [
      { label: 'Стиль печати', value: 'Поцвету', ro: true },
      { label: 'Таблица стилей печ...', value: 'monochrome.ctb' },
      { label: 'Пространство табл...', value: 'Модель', ro: true },
      { label: 'Тип стилей печати', value: 'Цветозависимые', ro: true },
    ],
  },
  {
    title: 'Вид',
    rows: [
      { label: 'Центр X', value: '211\'-11 7/8"', ro: true },
      { label: 'Центр Y', value: '3\'-0 9/16"', ro: true },
      { label: 'Центр Z', value: '0"', ro: true },
      { label: 'Высота', value: '91\'-3 1/2"', ro: true },
      { label: 'Ширина', value: '226\'-6"', ro: true },
    ],
  },
  {
    title: 'Разное',
    rows: [
      { label: 'Масштаб аннотаций', value: '1:1' },
      { label: 'Знак ПСК ВКЛ', value: 'Да' },
      { label: 'Знак ПСК в нач. коо...', value: 'Нет' },
      { label: 'ПСК в каждом Вэкр...', value: 'Да' },
      { label: 'Имя ПСК', value: '', ro: true },
      { label: 'Визуальный стиль', value: '2D каркас' },
    ],
  },
];

function Properties() {
  return (
    <aside className="mb-0.5 flex w-[279px] shrink-0 text-[10px] leading-[15px] text-[#222]">
      <div className="flex w-[263px] flex-col">
        <div className="flex h-5 items-center rounded-t-sm bg-[#a0a0a0] text-[#333]">
          <span className="ml-0.5 mr-1 h-2.5 w-[3px] border-x border-dotted border-[#333]" />
          Свойства
        </div>
        <div className="flex-1 rounded bg-[#f0f0f0] pl-[15px] pr-2.5 pt-2">
          <div className="flex items-center gap-[3px]">
            <label className="flex h-5 w-[173px] items-center border border-[#444] bg-gradient-to-b from-[#f2f2f2] to-[#d6d6d6] pl-1 pr-1">
              <select aria-label="Выбор объектов" className="flex-1 appearance-none bg-transparent outline-none">
                <option>Ничего не выбрано</option>
              </select>
              <Tri className="text-[#555]" />
            </label>
            <div className="flex">
              {['selectAdd', 'selectPick', 'quickSelect'].map((g) => (
                <button key={g} aria-label={g} className="flex h-5 w-[21px] items-center justify-center border border-[#b0b0b0] bg-[#f5f5f5]">
                  <Glyph name={g} />
                </button>
              ))}
            </div>
          </div>
          <div className="mt-[5px] flex flex-col gap-0.5">
            {sections.map((s) => (
              <section key={s.title}>
                <h3 className="flex h-[17px] items-center justify-between border border-[#8c8c8c] bg-gradient-to-b from-[#b4b4b4] to-[#9a9a9a] pl-[3px] pr-2 font-bold text-[#111]">
                  {s.title}
                  <Tri className="rotate-180 text-black" />
                </h3>
                <table className="ml-3.5 w-[224px] table-fixed border-separate border-spacing-0 border-l border-[#999] font-['Roboto']">
                  <tbody>
                    {s.rows.map((r) => (
                      <tr key={r.label} className="h-[17px] nth-[3n]:h-4">
                        <th scope="row" className="w-[103px] whitespace-nowrap border-b border-r border-[#999] p-0 pl-[3px] text-left font-normal">{r.label}</th>
                        <td className={clsx('whitespace-nowrap border-b border-r border-[#999] p-0 pl-0.5', r.ro ? 'bg-[#f0f0f0]' : 'bg-white')}>
                          <div className="flex items-center">
                            {r.mark === 'swatch' && <span className="mr-1 h-[9px] w-[9px] border border-[#222]" />}
                            {r.mark === 'line' && <span className="ml-0.5 mr-1 w-[50px] border-t border-[#222]" />}
                            {r.value}
                          </div>
                        </td>
                      </tr>
                    ))}
                  </tbody>
                </table>
              </section>
            ))}
          </div>
        </div>
      </div>
      <div className="mt-5 w-4">
        {['Проект', 'Отображение', 'Дополнительно'].map((t, i) => (
          <button
            key={t}
            className={clsx(
              'flex h-[106px] w-4 rotate-180 items-center justify-center border-t border-[#666] [writing-mode:vertical-rl]',
              i === 0 ? 'bg-[#f0f0f0]' : 'bg-[#c6c6c6]',
            )}
          >
            {t}
          </button>
        ))}
      </div>
    </aside>
  );
}

/* ---------- model space ---------- */

const STEP = 65.1;
const big = [1, 2, 3, 7, 8, 9, 13, 14, 15];
const small = [0, 4, 12, 16];
const holes = [...big.map((k) => ({ k, r: 16.5 })), ...small.map((k) => ({ k, r: 10.5 }))];

function platePath() {
  const x0 = 380.5;
  const dx = 28.4;
  let d = `M${x0} 301.5`;
  for (let k = 0; k < 17; k++) {
    const a = x0 + k * STEP;
    const b = a + STEP;
    d += `A32.5 32.5 0 0 0 ${a + dx} 284.5L${b - dx} 284.5A32.5 32.5 0 0 0 ${b} 301.5`;
  }
  d += `L${x0 + 17 * STEP} 370.5`;
  for (let k = 17; k > 0; k--) {
    const a = x0 + k * STEP;
    const b = a - STEP;
    d += `A32.5 32.5 0 0 0 ${a - dx} 387.5L${b + dx} 387.5A32.5 32.5 0 0 0 ${b} 370.5`;
  }
  return d + 'Z';
}

function Drawing() {
  return (
    <svg viewBox="286 125 1298 638" className="absolute left-0 top-0 h-[638px] w-[1298px]" fill="none" stroke="#d6d9dc">
      <path d={platePath()} fill="#5b5b5b" />
      {holes.map(({ k, r }) => (
        <g key={k}>
          <circle cx={412.7 + k * STEP} cy="335.700" r={r} fill="#212830" />
          <circle cx={410.3 + k * STEP} cy="547.500" r={r} />
        </g>
      ))}
      {[480.5, 614.5].map((cy) => Array.from({ length: 18 }, (_, k) => <circle key={`${cy}-${k}`} cx={378 + k * STEP} cy={cy} r="32.500" />))}
      {Array.from({ length: 17 }, (_, k) => {
        const x = 378 + (k + 0.5) * STEP;
        return <path key={k} d={`M${x - 5} 497.500h10M${x - 5} 598.500h10`} stroke="#aeb3b8" />;
      })}
      <path d="M378 513v69" />
      <path d="M1484.500 513v69" />
      <path d="M287.500 512v70" stroke="#8b9096" />
      {/* cursor */}
      <path d="M600 423h16M608 415v16" stroke="#8d9297" strokeWidth="1.500" />
      <path d="M605.500 420.500h5v5h-5z" />
      {/* UCS icon */}
      <path d="M302.500 705v42h42M298.500 743.500h8v8h-8z" />
      <path d="M303 691l5.500 6 5.500-6M308.500 697v5M347 735l12 11M359 735l-12 11" />
    </svg>
  );
}

function ViewCube() {
  return (
    <div className="absolute right-[13px] top-[29px] flex w-[112px] flex-col items-center text-[#b5b8bb]">
      <svg viewBox="0 0 112 116" className="h-[116px] w-28">
        <circle cx="56" cy="58" r="45" fill="none" stroke="#454b52" strokeWidth="11" />
        <rect x="34.500" y="36.500" width="43" height="43" fill="#b2b3b6" stroke="#8b8d90" />
        <rect x="42" y="44" width="27" height="27" fill="#a6a9ae" />
        <g fill="currentColor" textAnchor="middle" className="font-['Open_Sans'] text-[18px]">
          <text x="56" y="18">С</text>
          <text x="56" y="113">Ю</text>
          <text x="9" y="65">З</text>
          <text x="103" y="65">В</text>
        </g>
        <text x="56" y="62" textAnchor="middle" fill="#4a5261" className="font-['Roboto'] text-[11px]">Верх</text>
      </svg>
      <button className="mt-[15px] flex h-[15px] w-10 items-center justify-center gap-1 rounded-[3px] border border-[#c3c5cc] bg-[#9b9ea8] font-['Liberation_Sans'] text-[9px] font-bold text-[#5e636e]">
        МСК
        <svg viewBox="0 0 7 4" className="h-1 w-[7px]" fill="none" stroke="#c9ccd4"><path d="M0 .5h7L3.500 4z" /></svg>
      </button>
    </div>
  );
}

function NavBar() {
  return (
    <div className="absolute right-[3px] top-[196px] flex h-[177px] w-[27px] flex-col items-center rounded-[3px] border border-[#62686b] bg-[#565c5f]">
      <svg viewBox="0 0 26 176" className="h-[175px] w-[26px]" fill="none" stroke="#3f454a">
        <circle cx="21" cy="4" r="2.500" />
        <circle cx="21" cy="171" r="2.500" />
        <path d="M13 16h8v9a8.500 8.500 0 1 1-8-9z" />
        <circle cx="13" cy="25" r="5.500" />
        <circle cx="13" cy="25" r="3" />
        <path d="M11 41h4l-2 2.500z" fill="#3a4045" />
        <path d="M8 68l-4-7c1-2 2-1 4 1l-1-7c1-2 2 0 3 5l1-8c1-1 2 0 2 7l2-6c2 0 1 2 1 7l3-4c2 0 0 4-2 12z" />
        <path d="M4 75l12 12M4 79v-4h4M14 75h3v4M16 76L4 89M4 85v4h4" />
        <circle cx="17" cy="86" r="4.500" />
        <path d="M20 89l4 4" strokeWidth="2" />
        <path d="M11 99h4l-2 2.500z" fill="#3a4045" />
        <path d="M11 109h3v14h-3zM12.500 105l3 4h-6z" />
        <path d="M9 113c-9 2-5 6 4 6s12-4 4-6M6 116l-3 2 3 2" />
        <path d="M11 131h4l-2 2.500z" fill="#3a4045" />
        <path d="M4 140h5v5H4zM11 140h5v5h-5zM18 140h4v5h-4zM4 148h13v11H4z" />
        <path d="M8 150l5 3.500-5 3.500z" fill="#3a4045" />
      </svg>
    </div>
  );
}

function ModelSpace() {
  return (
    <div className="flex min-h-0 flex-1">
      <div className="flex min-w-0 flex-1 flex-col">
        <div className="relative min-h-0 flex-1 overflow-hidden bg-[#212830]">
          <Drawing />
          <div className="absolute left-1 top-1 flex gap-px text-[10px] leading-[14px] text-[#dcdcdc]">
            <span>[−]</span>
            <span>[Верхняя]</span>
            <span>[2D каркас]</span>
          </div>
          <div className="absolute right-[9px] top-1.5 flex w-[42px] items-center justify-between text-[#e8e8e8]">
            <button aria-label="Свернуть чертеж" className="flex h-2.5 w-2.5 items-end"><span className="h-0.5 w-2 bg-current" /></button>
            <button aria-label="Восстановить чертеж">
              <svg viewBox="0 0 10 10" className="h-2.5 w-2.5" fill="none" stroke="currentColor" strokeWidth="1.500"><path d="M1 3.500h5.500V9H1zM3 3V1h6v6H7" /></svg>
            </button>
            <button aria-label="Закрыть чертеж">
              <svg viewBox="0 0 10 10" className="h-2.5 w-2.5" fill="none" stroke="currentColor" strokeWidth="2"><path d="M1.500 1.500l7 7M8.500 1.500l-7 7" /></svg>
            </button>
          </div>
          <ViewCube />
          <NavBar />
        </div>
        <div className="flex h-3.5 items-center border-b border-[#555] bg-[#dcdcdc] px-1.5">
          <svg viewBox="0 0 4 6" className="h-1.5 w-1" fill="#777"><path d="M4 0L0 3l4 3z" /></svg>
          <span className="ml-auto mr-[53px] h-[9px] w-3.5 rounded-sm border border-[#aaa] bg-[#f4f4f4]" />
          <svg viewBox="0 0 4 6" className="h-1.5 w-1" fill="#777"><path d="M0 0l4 3-4 3z" /></svg>
        </div>
      </div>
      <div className="mr-px flex w-3.5 flex-col items-center bg-[#dcdcdc] pt-1.5">
        <Tri className="rotate-180 text-[#777]" />
        <span className="mt-auto h-3 w-2.5 rounded-sm border border-[#aaa] bg-[#f4f4f4]" />
        <Tri className="mb-5 mt-1.5 text-[#777]" />
      </div>
    </div>
  );
}

function StatusBar() {
  return (
    <div className="flex h-[21px] shrink-0 items-center border-b-2 border-[#d8d8d8] bg-gradient-to-b from-[#7c7c7c] to-[#959595] font-['Roboto'] text-[10px] text-[#111]">
      <div className="ml-auto flex h-[18px] items-stretch bg-[#adadad]">
        <button className="flex w-[42px] items-center gap-[3px] whitespace-nowrap border-l border-[#555] pl-0.5">
          <Glyph name="annoScale" className="w-3 h-3" />1:1<Tri big className="text-black" />
        </button>
        <button aria-label="Видимость аннотаций" className="flex w-[18px] items-center justify-center border-l border-[#555]"><Glyph name="annoBulb" className="w-3 h-3" /></button>
        <button aria-label="Автомасштаб" className="flex w-[18px] items-center justify-center border-x border-[#555]"><Glyph name="annoBolt" className="w-3 h-3" /></button>
      </div>
      <label className="ml-1 flex h-[18px] w-[52px] items-center border-x border-[#555] bg-[#adadad]">
        <select aria-label="Стиль" className="min-w-0 flex-1 appearance-none bg-transparent outline-none"><option>Standard</option></select>
        <Tri big className="text-black" />
      </label>
      <span className="ml-0.5 w-[117px] whitespace-nowrap">Секущая плоскость: 3'-6"</span>
      <div className="flex h-3.5 w-[70px] items-center justify-around border border-[#666] bg-[#a6a6a6]">
        {['trayA', 'trayB', 'trayC', 'bulb'].map((g) => <Glyph key={g} name={g} className="w-3 h-3" />)}
      </div>
      <button aria-label="Меню строки состояния" className="ml-1.5 flex h-[18px] w-2.5 items-center justify-center bg-[#b5b5b5]"><Tri className="text-black" /></button>
    </div>
  );
}

function CommandLine() {
  return (
    <div className="mt-1 flex h-[46px] shrink-0 bg-[#c8c8c8] font-['Liberation_Mono'] text-[10px] leading-3 text-[#111]">
      <div className="w-3 shrink-0 bg-[#9f9f9f] pt-0.5"><span className="mx-auto block h-[3px] w-2.5 border-y border-dotted border-[#333]" /></div>
      <div className="flex flex-1 flex-col">
        <div className="h-8 border-b border-[#999] pl-px pt-0.5">
          <p>Команда:</p>
          <p>Команда: _.erase найдено: 1</p>
        </div>
        <label className="flex flex-1 items-end bg-white pl-px text-[#555]">
          Команда:
          <input className="ml-1 h-3 flex-1 bg-transparent outline-none" />
        </label>
      </div>
    </div>
  );
}

function Footer() {
  return (
    <footer className="relative h-[52px] shrink-0 border-t border-[#444] bg-[#8f8f8f] pr-0.5">
      <div className="flex h-[3px] justify-between pl-[153px] pr-[120px]">
        <div className="flex gap-px">
          {Array.from({ length: 14 }, (_, i) => <span key={i} className={clsx('w-[17px]', i % 2 ? 'bg-[#b9cccc]' : 'bg-[#a9a9a9]')} />)}
        </div>
        <div className="flex gap-px">
          {Array.from({ length: 10 }, (_, i) => <span key={i} className={clsx('w-[17px]', i === 3 ? 'bg-[#c5dede]' : 'bg-[#b4b4b4]')} />)}
        </div>
      </div>
      <span className="absolute right-1 top-1 h-3 w-3 border border-t-2 border-[#444] bg-white" />
      <div className="relative h-12 rounded-tl-[14px] rounded-tr-[28px] bg-black" />
    </footer>
  );
}

export default function App() {
  return (
    <div className="flex h-screen min-h-[640px] flex-col overflow-hidden bg-[#686868] font-['Open_Sans',sans-serif]">
      <Header />
      <Ribbon />
      <main className="flex min-h-0 flex-1 pt-[5px]">
        <Properties />
        <div className="ml-1.5 flex min-w-0 flex-1 flex-col">
          <div className="flex min-h-0 flex-1 flex-col border-l border-[#999]">
            <ModelSpace />
            <StatusBar />
          </div>
          <CommandLine />
        </div>
      </main>
      <Footer />
    </div>
  );
}
